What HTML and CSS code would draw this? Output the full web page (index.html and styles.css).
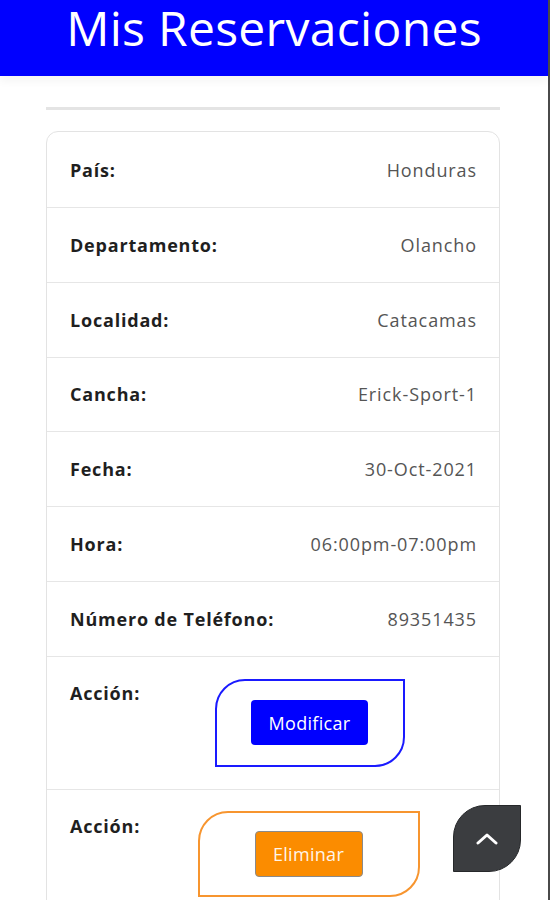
FILE: index.html
```html
<!DOCTYPE html>
<html>
    <head>
        <meta charset="utf-8">
        <link rel="stylesheet" href="styles.css">
    </head>
    <body>
        <div class="page">
            <header class="top">
                <h1>Mis Reservaciones</h1>
            </header>
            <main class="content">
                <hr class="divider">
                <div class="card">
                    <div class="row"><span class="label">País:</span><span class="value">Honduras</span></div>
                    <div class="row"><span class="label">Departamento:</span><span class="value">Olancho</span></div>
                    <div class="row"><span class="label">Localidad:</span><span class="value">Catacamas</span></div>
                    <div class="row"><span class="label">Cancha:</span><span class="value">Erick-Sport-1</span></div>
                    <div class="row"><span class="label">Fecha:</span><span class="value">30-Oct-2021</span></div>
                    <div class="row"><span class="label">Hora:</span><span class="value">06:00pm-07:00pm</span></div>
                    <div class="row"><span class="label">Número de Teléfono:</span><span class="value">89351435</span></div>
                    <div class="row action">
                        <span class="label">Acción:</span>
                        <div class="cell">
                            <div class="leaf leaf-blue">
                                <button class="btn btn-blue">Modificar</button>
                            </div>
                        </div>
                    </div>
                    <div class="row action">
                        <span class="label">Acción:</span>
                        <div class="cell">
                            <div class="leaf leaf-orange">
                                <button class="btn btn-orange">Eliminar</button>
                            </div>
                        </div>
                    </div>
                </div>
            </main>
            <a class="to-top" href="#">
                <svg width="22" height="12" viewBox="0 0 22 12"><path d="M2 10 L11 2 L20 10" fill="none" stroke="#fff" stroke-width="3" stroke-linecap="round" stroke-linejoin="round"/></svg>
            </a>
        </div>
    </body>
</html>
```

FILE: styles.css
```css
body {margin: 0; font-family: "Open Sans", Arial, sans-serif; background: #fff; color: #222; overflow: hidden;}
.page {min-height: 100vh; border-right: 2px solid #4a4a4a; box-sizing: border-box;}

.top {background-color: #0000ff; height: 76px; display: flex; justify-content: center; box-shadow: 0 6px 8px rgba(0, 0, 0, 0.04);}
.top h1 {margin: 0; color: #fff; font-weight: 400; font-size: 48px; line-height: 56px; letter-spacing: 0.3px;}

.content {padding: 0 48px 0 46px;}
.divider {border: none; height: 3px; background: #e4e4e4; margin: 31px 0 21px 0;}

.card {border: 1px solid #e3e3e3; border-radius: 12px; height: 900px;}
.row {display: flex; align-items: center; justify-content: space-between; height: 73.75px; padding: 0 22px 0 23px; border-bottom: 1px solid #e6e6e6;}
.row:first-child {height: 75px;}
.label {font-weight: 700; font-size: 18px; color: #1f1f1f; letter-spacing: 0.8px;}
.value {font-weight: 400; font-size: 18px; color: #555; letter-spacing: 0.9px;}

.row.action {height: auto; align-items: flex-start; padding-top: 21px; padding-bottom: 22px;}
.row.action .label {width: 72px; line-height: 30px;}
.cell {flex: 1; display: flex; justify-content: center;}

.leaf {display: flex; align-items: center; justify-content: center; box-sizing: border-box; border-radius: 30px 0 30px 0;}
.leaf-blue {width: 190px; height: 88px; border: 2px solid #1a1aff; margin-top: 1px;}
.leaf-orange {width: 222px; height: 86px; border: 2px solid #f7952f; margin-left: -2px;}

.btn {font-family: "Open Sans", Arial, sans-serif; font-size: 18px; color: #fff; border-radius: 4px; cursor: pointer; letter-spacing: 0.3px;}
.btn-blue {background-color: #0000ff; border: none; width: 117px; height: 45px;}
.btn-orange {background-color: #fb8c00; border: 1px solid #8a8a8a; width: 108px; height: 46px; color: #fff5ea;}

.to-top {position: fixed; right: 29px; bottom: 28px; width: 68px; height: 67px; box-sizing: border-box; background: #3b3d40; border: 1px solid #26282a; border-radius: 32px 0 32px 0; display: flex; align-items: center; justify-content: center;}
```
